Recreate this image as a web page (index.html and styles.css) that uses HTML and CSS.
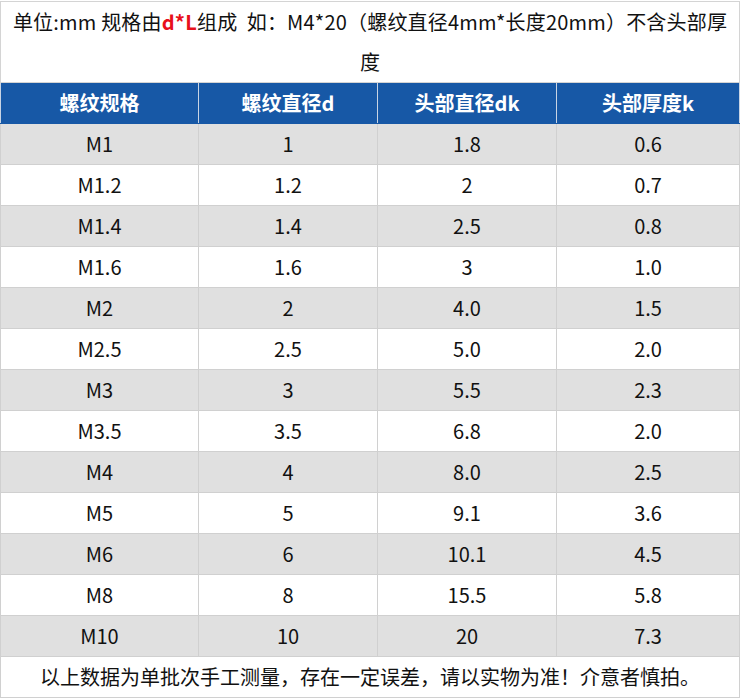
FILE: index.html
```html
<!DOCTYPE html>
<html lang="zh-CN">
<head>
<meta charset="utf-8">
<title>螺纹规格</title>
<link rel="stylesheet" href="styles.css">
</head>
<body>
<table class="spec">
  <colgroup>
    <col class="c1"><col class="c2"><col class="c3"><col class="c4">
  </colgroup>
  <tr class="title-row">
    <td colspan="4" class="title">单位:mm 规格由<b class="red">d*L</b>组成&nbsp; 如：M4*20（螺纹直径4mm*长度20mm）不含头部厚<br>度</td>
  </tr>
  <tr class="head">
    <th>螺纹规格</th><th>螺纹直径d</th><th>头部直径dk</th><th>头部厚度k</th>
  </tr>
  <tr class="g"><td>M1</td><td>1</td><td>1.8</td><td>0.6</td></tr>
  <tr><td>M1.2</td><td>1.2</td><td>2</td><td>0.7</td></tr>
  <tr class="g"><td>M1.4</td><td>1.4</td><td>2.5</td><td>0.8</td></tr>
  <tr><td>M1.6</td><td>1.6</td><td>3</td><td>1.0</td></tr>
  <tr class="g"><td>M2</td><td>2</td><td>4.0</td><td>1.5</td></tr>
  <tr><td>M2.5</td><td>2.5</td><td>5.0</td><td>2.0</td></tr>
  <tr class="g"><td>M3</td><td>3</td><td>5.5</td><td>2.3</td></tr>
  <tr><td>M3.5</td><td>3.5</td><td>6.8</td><td>2.0</td></tr>
  <tr class="g"><td>M4</td><td>4</td><td>8.0</td><td>2.5</td></tr>
  <tr><td>M5</td><td>5</td><td>9.1</td><td>3.6</td></tr>
  <tr class="g"><td>M6</td><td>6</td><td>10.1</td><td>4.5</td></tr>
  <tr><td>M8</td><td>8</td><td>15.5</td><td>5.8</td></tr>
  <tr class="g"><td>M10</td><td>10</td><td>20</td><td>7.3</td></tr>
  <tr class="foot">
    <td colspan="4">以上数据为单批次手工测量，存在一定误差，请以实物为准！介意者慎拍。</td>
  </tr>
</table>
</body>
</html>
```

FILE: styles.css
```css
html, body {
  margin: 0;
  padding: 0;
  background: #ffffff;
}
body {
  font-family: "Noto Sans CJK SC", "Noto Sans", sans-serif;
  color: #111111;
}
.spec {
  margin-top: 1px;
  width: 739px;
  border-collapse: collapse;
  table-layout: fixed;
  font-size: 20px;
}
.c1 { width: 198px; }
.c2 { width: 179px; }
.c3 { width: 179px; }
.c4 { width: 183px; }
.spec td, .spec th {
  border: 1px solid #d0d0d0;
  text-align: center;
  padding: 0;
  height: 40px;
  line-height: 40px;
  font-weight: normal;
}
.title-row td.title {
  height: 80px;
  line-height: 40px;
  border-color: #d4d4d4;
  letter-spacing: 0.2px;
  font-size: 20px;
}
.red {
  color: #e8101a;
  font-weight: bold;
}
.head th {
  background: #1758a6;
  color: #ffffff;
  font-weight: bold;
  border-color: #1758a6;
  border-left: 1px solid #c8d4e4;
  border-right: 1px solid #c8d4e4;
}
.g td {
  background: #e0e0e0;
}
```
